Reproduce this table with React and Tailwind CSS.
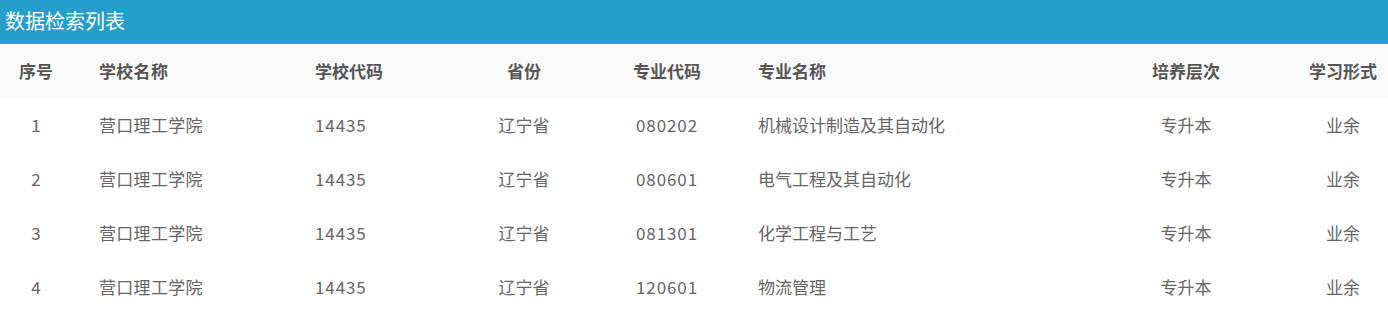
const rows = [
  ["1", "营口理工学院", "14435", "辽宁省", "080202", "机械设计制造及其自动化", "专升本", "业余"],
  ["2", "营口理工学院", "14435", "辽宁省", "080601", "电气工程及其自动化", "专升本", "业余"],
  ["3", "营口理工学院", "14435", "辽宁省", "081301", "化学工程与工艺", "专升本", "业余"],
  ["4", "营口理工学院", "14435", "辽宁省", "120601", "物流管理", "专升本", "业余"],
];

const head = ["序号", "学校名称", "学校代码", "省份", "专业代码", "专业名称", "培养层次", "学习形式"];

// per-column cell classes
const cols = [
  "w-[72px] text-center",
  "w-[216px] pl-[27px] text-left tracking-[0.3px]",
  "w-[162px] pl-[27px] text-left",
  "w-[148px] text-center",
  "w-[138px] text-center",
  "w-[374px] pl-[22px] text-left",
  "w-[152px] text-center",
  "w-[126px] pl-[36px] text-center",
];

// digits in the reference font run a bit wider
const num = [false, false, true, false, true, false, false, false];

export default function App() {
  return (
    <div className="w-[1388px] h-[319px] bg-white" style={{ fontFamily: '"Microsoft YaHei", "Noto Sans CJK SC", sans-serif' }}>
      <div className="h-[44px] bg-[#259dcd] flex items-center pl-[5px] text-white text-[20px] pb-[2px]">
        数据检索列表
      </div>
      <div className="flex h-[54px] items-center bg-[#f9f9f9] text-[17px] font-bold text-[#555]">
        {head.map((h, i) => (
          <div key={i} className={cols[i]}>{h}</div>
        ))}
      </div>
      {rows.map((r, ri) => (
        <div key={ri} className="flex h-[54px] items-center text-[17px] text-[#666]">
          {r.map((c, i) => (
            <div key={i} className={cols[i] + (num[i] ? " tracking-[0.9px]" : "")}>{c}</div>
          ))}
        </div>
      ))}
    </div>
  );
}
